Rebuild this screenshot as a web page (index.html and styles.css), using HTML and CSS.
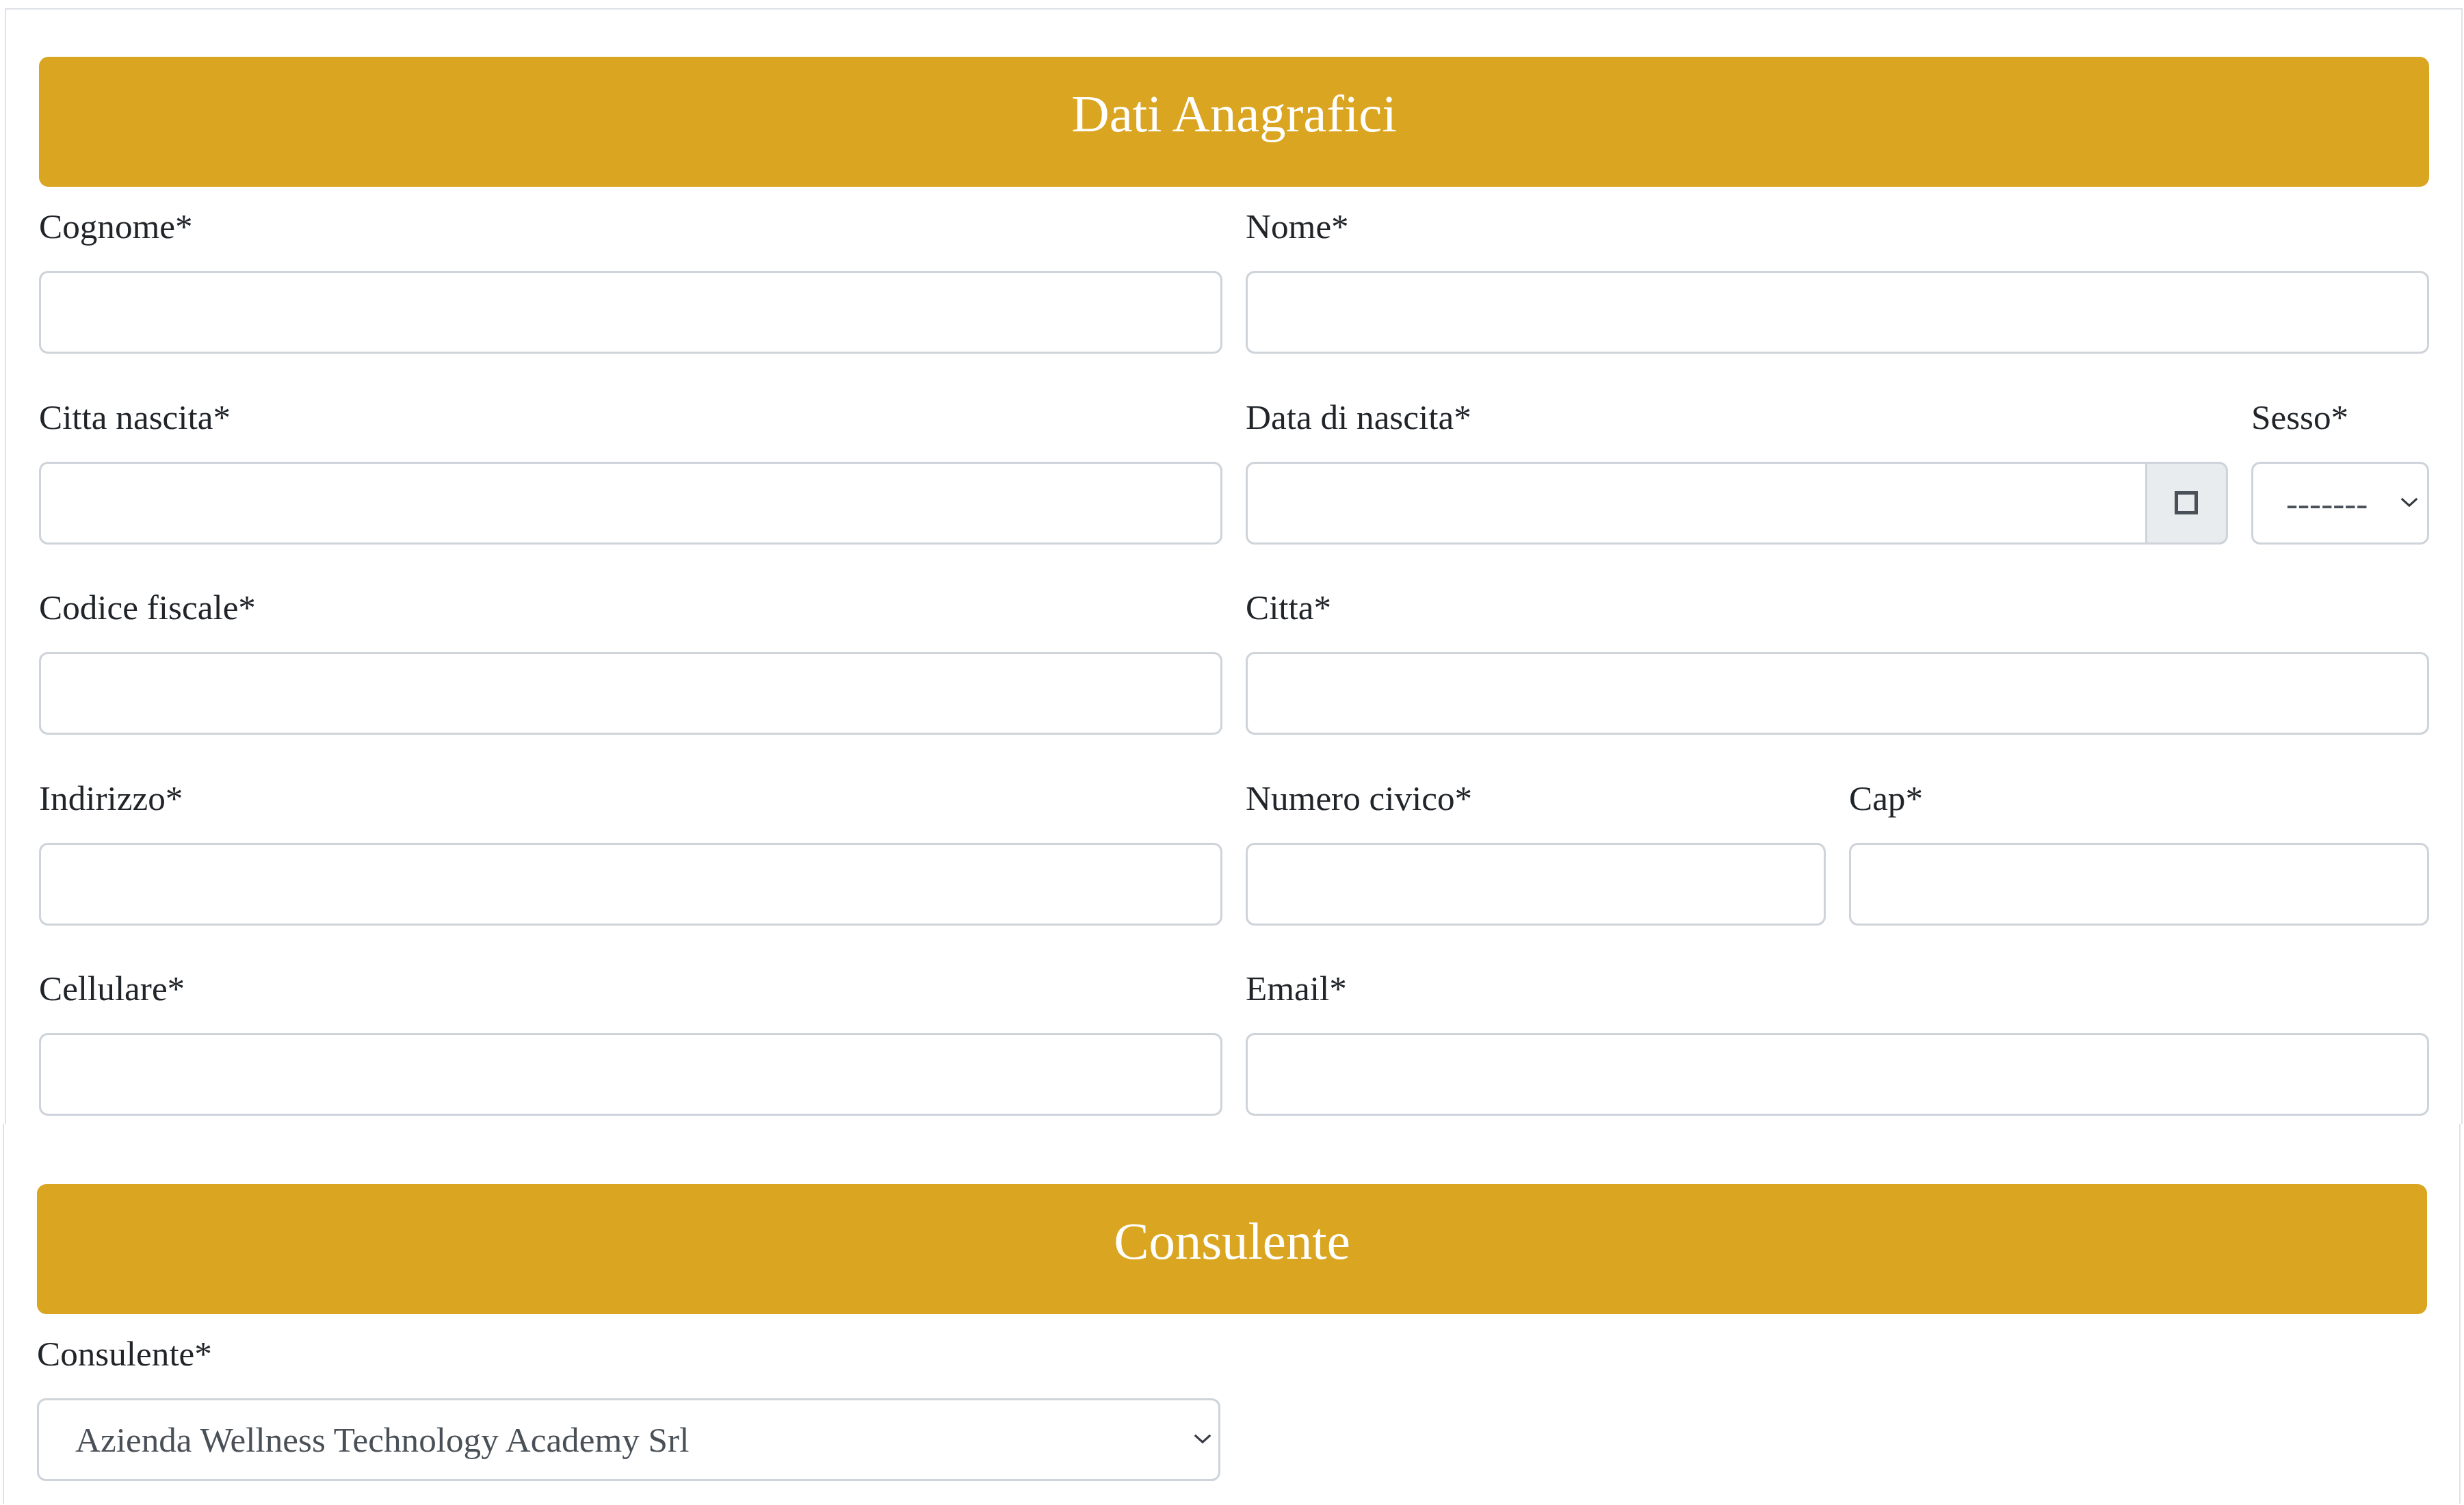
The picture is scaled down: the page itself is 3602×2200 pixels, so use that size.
FILE: index.html
```html
<!DOCTYPE html>
<html lang="it">
<head>
<meta charset="utf-8">
<title>Dati Anagrafici</title>
<link rel="stylesheet" href="styles.css">
</head>
<body>
<div class="card card-anag">
  <div class="banner"><h4 class="banner-title">Dati Anagrafici</h4></div>
  <div class="form-grid">
    <div class="field span-6"><label class="field-label">Cognome*</label><input class="form-control" type="text"></div>
    <div class="field span-6"><label class="field-label">Nome*</label><input class="form-control" type="text"></div>

    <div class="field span-6"><label class="field-label">Citta nascita*</label><input class="form-control" type="text"></div>
    <div class="field span-5"><label class="field-label">Data di nascita*</label>
      <div class="input-group">
        <input class="form-control group-input" type="text">
        <span class="addon"><span class="cal-icon"></span></span>
      </div>
    </div>
    <div class="field span-1"><label class="field-label">Sesso*</label>
      <div class="select-wrap">
        <select class="form-control form-select sesso-select"><option>-------</option></select>
        <svg class="chevron chevron-sesso" viewBox="0 0 28 16" width="28" height="15"><path d="M2 2 L14 13 L26 2" fill="none" stroke="#343a40" stroke-width="3.4"/></svg>
      </div>
    </div>

    <div class="field span-6"><label class="field-label">Codice fiscale*</label><input class="form-control" type="text"></div>
    <div class="field span-6"><label class="field-label">Citta*</label><input class="form-control" type="text"></div>

    <div class="field span-6"><label class="field-label">Indirizzo*</label><input class="form-control" type="text"></div>
    <div class="field span-3"><label class="field-label">Numero civico*</label><input class="form-control" type="text"></div>
    <div class="field span-3"><label class="field-label">Cap*</label><input class="form-control" type="text"></div>

    <div class="field span-6"><label class="field-label">Cellulare*</label><input class="form-control" type="text"></div>
    <div class="field span-6"><label class="field-label">Email*</label><input class="form-control" type="text"></div>
  </div>
</div>
<div class="card card-cons">
  <div class="banner"><h4 class="banner-title">Consulente</h4></div>
  <div class="form-grid">
    <div class="field span-6"><label class="field-label">Consulente*</label>
      <div class="select-wrap">
        <select class="form-control form-select cons-select"><option>Azienda Wellness Technology Academy Srl</option></select>
        <svg class="chevron chevron-cons" viewBox="0 0 28 16" width="28" height="15"><path d="M2 2 L14 13 L26 2" fill="none" stroke="#343a40" stroke-width="3.4"/></svg>
      </div>
    </div>
  </div>
</div>
</body>
</html>
```
FILE: styles.css
```css
* { box-sizing: border-box; }
html, body { margin: 0; padding: 0; background: #ffffff; }
body {
  font-family: "Liberation Serif", "Times New Roman", serif;
  font-size: 51.2px;
  line-height: 1.5;
  color: #212529;
}
.card {
  width: 3593px;
  border-left: 2px solid #dee2e6;
  border-right: 2px solid #dee2e6;
  background: #fff;
}
.card-anag {
  margin: 12px 0 0 7px;
  border-top: 2px solid #dee2e6;
  padding: 69px 47px 12px 48px;
}
.card-cons {
  margin: 0 0 0 4px;
  padding: 88px 47px 33px 48px;
}
.banner {
  height: 190px;
  background: #daa520;
  border-radius: 14px;
  padding-top: 38px;
  margin-bottom: 19px;
  text-align: center;
}
.banner-title {
  margin: 0;
  font-size: 76.8px;
  line-height: 92px;
  font-weight: normal;
  color: #ffffff;
}
.form-grid {
  display: grid;
  grid-template-columns: repeat(12, 1fr);
  column-gap: 34px;
  row-gap: 53.5px;
}
.span-6 { grid-column: span 6; }
.span-5 { grid-column: span 5; }
.span-3 { grid-column: span 3; }
.span-1 { grid-column: span 1; }
.field { display: flex; flex-direction: column; min-width: 0; }
.field-label {
  display: block;
  line-height: 78px;
  margin-bottom: 26px;
  white-space: nowrap;
}
.form-control {
  display: block;
  width: 100%;
  height: 121px;
  padding: 19px 38px;
  font-family: inherit;
  font-size: 51.2px;
  color: #495057;
  background: #fff;
  border: 3px solid #ced4da;
  border-radius: 13px;
  outline: none;
  margin: 0;
}
.input-group { display: flex; width: 100%; }
.group-input {
  flex: 1 1 auto;
  width: auto;
  min-width: 0;
  border-radius: 13px 0 0 13px;
}
.addon {
  flex: 0 0 121px;
  height: 121px;
  margin-left: -3px;
  background: #e9ecef;
  border: 3px solid #ced4da;
  border-radius: 0 13px 13px 0;
  display: flex;
  align-items: center;
  justify-content: center;
}
.cal-icon {
  width: 34px;
  height: 34px;
  border: 5px solid #495057;
  margin-top: 0;
  margin-left: -2px;
}
.select-wrap { position: relative; width: 100%; }
.form-select {
  -webkit-appearance: none;
  appearance: none;
  padding: 19px 60px 19px 51px;
  line-height: 77px;
  white-space: nowrap;
  overflow: hidden;
}
.cons-select { padding-left: 53px; }
.sesso-select { padding-left: 48px; padding-right: 20px; }
.chevron {
  position: absolute;
  right: 13px;
  top: 52px;
  pointer-events: none;
}
.chevron-sesso { right: 15px; }
.chevron-cons { right: 12px; }
```
